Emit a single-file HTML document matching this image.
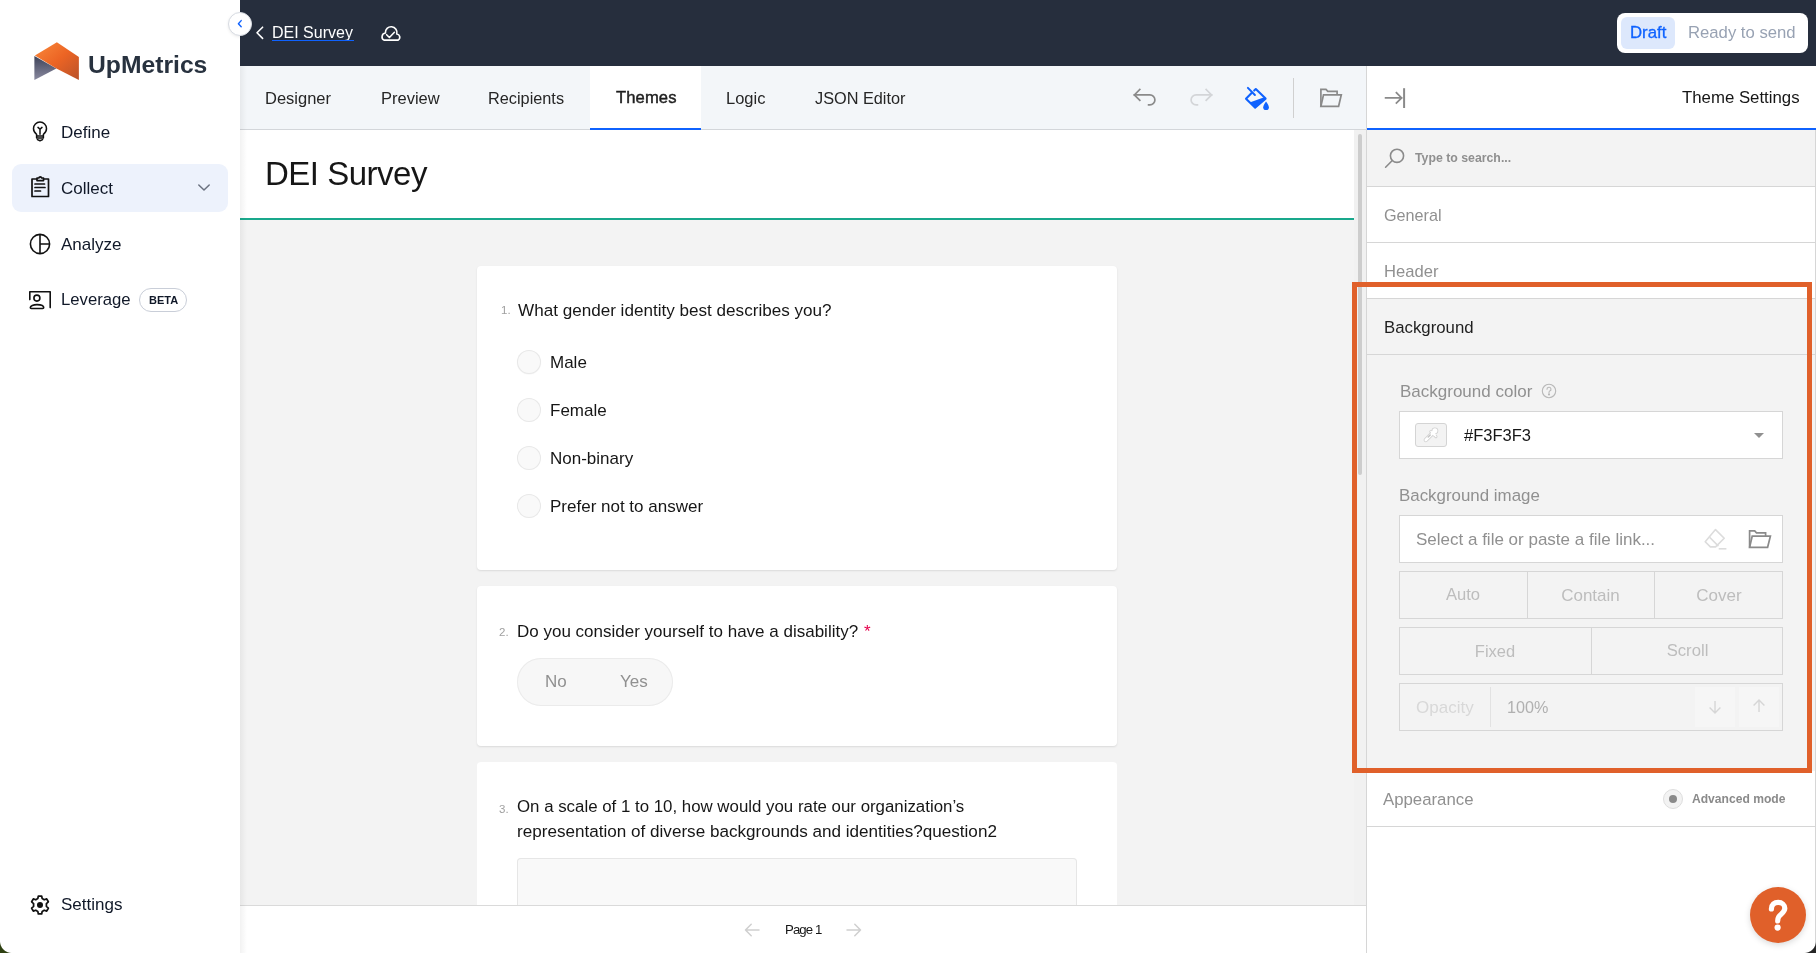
<!DOCTYPE html>
<html><head><meta charset="utf-8">
<style>
*{box-sizing:border-box;margin:0;padding:0}
html,body{width:1816px;height:953px;overflow:hidden;background:#fff;font-family:"Liberation Sans",sans-serif;color:#161616}
.a{position:absolute}
.t{position:absolute;line-height:1;white-space:nowrap;will-change:transform}
svg{position:absolute;overflow:visible}
</style></head><body>

<!-- ============ LEFT SIDEBAR ============ -->
<div class="a" id="side" style="left:0;top:0;width:240px;height:953px;background:#fff">
  <!-- logo -->
  <svg style="left:0;top:0" width="100" height="100" viewBox="0 0 100 100">
    <defs>
      <linearGradient id="og" x1="0" y1="0" x2="1" y2="1">
        <stop offset="0" stop-color="#f98a3c"/><stop offset="0.5" stop-color="#ec6424"/><stop offset="1" stop-color="#b9522a"/>
      </linearGradient>
      <linearGradient id="gg" x1="0" y1="0" x2="0" y2="1">
        <stop offset="0" stop-color="#3e4258"/><stop offset="1" stop-color="#8a8aa0"/>
      </linearGradient>
    </defs>
    <path d="M34.4 55.9 L56.4 68.5 L34.4 80 Z" fill="url(#gg)"/>
    <path d="M56.9 42.3 L78.9 57 L78.9 80 L56.4 68.5 L34.9 55.4 Z" fill="url(#og)"/>
  </svg>
  <div class="t" style="left:87.5px;top:53.3px;font-size:24.7px;font-weight:700;color:#28323f;letter-spacing:0">UpMetrics</div>

  <!-- Define -->
  <svg style="left:30px;top:119px" width="20" height="24" viewBox="0 0 20 24" fill="none" stroke="#111" stroke-width="1.5" stroke-linecap="round" stroke-linejoin="round">
    <path d="M6.6 15.4 C4.6 14 3.5 12.1 3.5 9.6 A6.5 6.5 0 0 1 16.5 9.6 C16.5 12.1 15.4 14 13.4 15.4 L13.4 19 L6.6 19 Z"/>
    <path d="M8 8.4 L10 10.3 L12 8.4 M10 10.3 L10 15.2"/>
    <path d="M6.8 17 H13.2 M7.4 20.6 L10 21.8 L12.6 20.6" />
  </svg>
  <div class="t" style="left:60.6px;top:123.7px;font-size:17px;color:#101828">Define</div>

  <!-- Collect (active) -->
  <div class="a" style="left:12px;top:164px;width:216px;height:48px;border-radius:9px;background:#edf2fc"></div>
  <svg style="left:30px;top:176px" width="20" height="22" viewBox="0 0 20 22" fill="none" stroke="#111" stroke-width="1.7" stroke-linejoin="round">
    <path d="M7 3 H2 V20.5 H18.5 V3 H13.5"/>
    <path d="M7 4.6 V2 H8.8 A1.5 1.5 0 0 1 11.7 2 H13.5 V4.6 Z"/>
    <path d="M5 8 H14.5 M5 11.5 H15 M5 15 H10.5" stroke-linecap="round"/>
  </svg>
  <div class="t" style="left:60.5px;top:179.8px;font-size:17px;color:#101828">Collect</div>
  <svg style="left:196px;top:181px" width="16" height="12" viewBox="0 0 16 12" fill="none" stroke="#6b7280" stroke-width="1.5" stroke-linecap="round" stroke-linejoin="round">
    <path d="M2.8 4 L8 9 L13.2 4"/>
  </svg>

  <!-- Analyze -->
  <svg style="left:29px;top:233px" width="22" height="22" viewBox="0 0 22 22" fill="none" stroke="#111" stroke-width="1.6">
    <circle cx="11" cy="11" r="9.6"/>
    <path d="M11 1.4 V20.6 M11 11 H20.6"/>
  </svg>
  <div class="t" style="left:60.8px;top:235.7px;font-size:17px;color:#101828">Analyze</div>

  <!-- Leverage -->
  <svg style="left:28px;top:290px" width="24" height="22" viewBox="0 0 24 22" fill="none" stroke="#111" stroke-width="1.6" stroke-linejoin="round">
    <path d="M1.8 9.6 V1.7 H22.2 V17.6" stroke-linecap="round"/>
    <circle cx="8.9" cy="8.1" r="3"/>
    <path d="M2.3 17.6 C2.3 15.8 5.4 14.6 9 14.6 C12.6 14.6 15.7 15.8 15.7 17.6 C15.7 18.2 15.3 18.5 14.7 18.5 H3.3 C2.7 18.5 2.3 18.2 2.3 17.6 Z"/>
  </svg>
  <div class="t" style="left:60.8px;top:291.5px;font-size:16.7px;color:#101828">Leverage</div>
  <div class="a" style="left:139px;top:288px;width:48px;height:24px;border-radius:12px;border:1px solid #c9ced8"></div>
  <div class="t" style="left:148.5px;top:294.6px;font-size:11px;font-weight:700;color:#101828;letter-spacing:0">BETA</div>

  <!-- Settings -->
  <svg style="left:29px;top:894px" width="22" height="22" viewBox="0 0 24 24" fill="none" stroke="#111" stroke-width="1.9" stroke-linejoin="round">
    <path d="M10.2 2.2 H13.8 L14.4 5 L16.6 6.3 L19.3 5.4 L21.1 8.5 L19 10.4 V13.6 L21.1 15.5 L19.3 18.6 L16.6 17.7 L14.4 19 L13.8 21.8 H10.2 L9.6 19 L7.4 17.7 L4.7 18.6 L2.9 15.5 L5 13.6 V10.4 L2.9 8.5 L4.7 5.4 L7.4 6.3 L9.6 5 Z"/>
    <circle cx="12" cy="12" r="3.3" fill="#111" stroke="none"/>
  </svg>
  <div class="t" style="left:60.5px;top:896.2px;font-size:17px;color:#101828">Settings</div>
</div>

<!-- ============ TOP BAR ============ -->
<div class="a" style="left:240px;top:0;width:1576px;height:66px;background:#262e3d"></div>
<!-- collapse circle -->
<div class="a" style="left:228px;top:12px;width:24px;height:24px;border-radius:50%;background:#fff;border:1px solid #d7dbe2;box-shadow:0 1px 3px rgba(0,0,0,.08)"></div>
<svg style="left:228px;top:12px" width="24" height="24" viewBox="0 0 24 24" fill="none" stroke="#0f62fe" stroke-width="1.4" stroke-linecap="round" stroke-linejoin="round">
  <path d="M13.2 8.6 L10.4 11.7 L13.2 14.8"/>
</svg>
<svg style="left:252px;top:24px" width="16" height="18" viewBox="0 0 16 18" fill="none" stroke="#fff" stroke-width="1.6" stroke-linecap="round" stroke-linejoin="round">
  <path d="M10.6 3.2 L5 8.8 L10.6 14.4"/>
</svg>
<div class="t" style="left:272.3px;top:25.1px;font-size:16px;color:#fff">DEI Survey</div>
<div class="a" style="left:272px;top:40px;width:82px;height:1.3px;background:#0f62fe"></div>
<svg style="left:378px;top:22px" width="26" height="22" viewBox="0 0 26 22" fill="none" stroke="#fff" stroke-width="1.6" stroke-linejoin="round" stroke-linecap="round">
  <path d="M6 18.1 A3.8 3.8 0 0 1 7.4 11 A5.8 5.8 0 1 1 18.8 12 A3.3 3.3 0 0 1 20.2 18.1 Z"/>
  <path d="M8.6 12.7 L11.4 15.5 L16.4 10.3"/>
</svg>
<!-- draft toggle -->
<div class="a" style="left:1617px;top:13px;width:191px;height:40px;border-radius:8px;background:#fff"></div>
<div class="a" style="left:1621px;top:17px;width:54px;height:32px;border-radius:6px;background:#dde8fc"></div>
<div class="t" style="left:1629.9px;top:24.6px;font-size:16.8px;color:#0f62fe;-webkit-text-stroke:0.3px #0f62fe">Draft</div>
<div class="t" style="left:1687.7px;top:25.4px;font-size:16.7px;color:#98a2b3">Ready to send</div>

<!-- ============ TABS BAR ============ -->
<div class="a" style="left:240px;top:66px;width:1126px;height:64px;background:#f3f6f9;border-bottom:1px solid #d3d6da"></div>
<div class="a" style="left:590px;top:66px;width:111px;height:63px;background:#fff"></div>
<div class="a" style="left:590px;top:128px;width:111px;height:2px;background:#0f62fe"></div>
<div class="t" style="left:264.5px;top:89.9px;font-size:16.5px;color:#262626">Designer</div>
<div class="t" style="left:380.5px;top:89.9px;font-size:16.5px;color:#262626">Preview</div>
<div class="t" style="left:488.3px;top:89.9px;font-size:16.3px;color:#262626">Recipients</div>
<div class="t" style="left:615.6px;top:90.2px;font-size:16.6px;letter-spacing:0.1px;color:#1e1e1e;-webkit-text-stroke:0.45px #1e1e1e">Themes</div>
<div class="t" style="left:725.5px;top:89.9px;font-size:16.5px;color:#262626">Logic</div>
<div class="t" style="left:815px;top:89.9px;font-size:16.3px;color:#262626">JSON Editor</div>

<!-- undo -->
<svg style="left:1131px;top:86px" width="28" height="24" viewBox="0 0 28 24" fill="none" stroke="#8a8a8a" stroke-width="1.7" stroke-linecap="square" stroke-linejoin="miter">
  <path d="M8.8 3.5 L3.4 8.9 L8.8 14.3"/>
  <path d="M3.4 8.9 H18.9 A5 5 0 0 1 18.9 18.9 H17.6"/>
</svg>
<!-- redo -->
<svg style="left:1186.5px;top:86px" width="28" height="24" viewBox="0 0 28 24" fill="none" stroke="#d3d5d8" stroke-width="1.7" stroke-linecap="square">
  <path d="M19.2 3.5 L24.6 8.9 L19.2 14.3"/>
  <path d="M24.6 8.9 H9.1 A5 5 0 0 0 9.1 18.9 H10.4"/>
</svg>
<!-- paint bucket -->
<svg style="left:1243px;top:85px" width="28" height="27" viewBox="0 0 28 27" fill="none">
  <path d="M4.9 2.9 L11.9 10" stroke="#0f62fe" stroke-width="2" stroke-linecap="round"/>
  <path d="M8.6 8 L3 13.8 L12 22.6 L22.6 13.6 L12.8 4.1 L11.2 5.6" stroke="#0f62fe" stroke-width="2.1" stroke-linejoin="round" stroke-linecap="round"/>
  <path d="M6.6 17.4 L20.6 12.6 L22.8 13.6 L12 23.4 Z" fill="#0f62fe"/>
  <path d="M25.9 22.2 A2.85 2.85 0 0 1 20.2 22.2 C20.2 20.8 21.6 18.6 23 16.6 C24.4 18.6 25.9 20.8 25.9 22.2 Z" fill="#0f62fe"/>
</svg>
<div class="a" style="left:1293px;top:78px;width:1px;height:40px;background:#d0d0d0"></div>
<!-- folder -->
<svg style="left:1318px;top:86px" width="26" height="24" viewBox="0 0 26 24" fill="none" stroke="#8a8a8a" stroke-width="1.7" stroke-linejoin="miter">
  <path d="M2.9 20.3 V3.4 H8 L9.8 5.4 H19.1 V8.6"/>
  <path d="M2.9 20.3 L5.5 8.8 H23.3 L20.6 20.3 Z"/>
</svg>

<!-- ============ SURVEY AREA ============ -->
<div class="a" style="left:240px;top:130px;width:1126px;height:775px;background:#f3f3f3;overflow:hidden">
  <div class="a" style="left:0;top:0;width:1114px;height:88px;background:#fff"></div>
  <div class="a" style="left:0;top:88px;width:1114px;height:2px;background:#19a88c"></div>
  <div class="a" style="left:1114px;top:0;width:12px;height:775px;background:#f1f1f1"></div>
  <div class="a" style="left:1118px;top:3.5px;width:4px;height:341px;border-radius:2px;background:#cdcdcd"></div>
</div>
<div class="t" style="left:264.8px;top:157px;font-size:33px;letter-spacing:-0.5px;color:#161616">DEI Survey</div>

<!-- card 1 -->
<div class="a" style="left:477px;top:266px;width:640px;height:304px;background:#fff;border-radius:4px;box-shadow:0 1px 2px rgba(0,0,0,.10)"></div>
<div class="t" style="left:500.5px;top:305.1px;font-size:11.5px;color:#a0a0a0">1.</div>
<div class="t" style="left:517.5px;top:301.6px;font-size:17.1px;color:#161616">What gender identity best describes you?</div>
<div class="a" style="left:517px;top:350px;width:24px;height:24px;border-radius:50%;background:#f9f9f9;box-shadow:inset 0 0 0 1px #e8e8e8, 0 0.5px 1px rgba(0,0,0,.05)"></div>
<div class="t" style="left:549.5px;top:353.6px;font-size:17px;color:#161616">Male</div>
<div class="a" style="left:517px;top:398px;width:24px;height:24px;border-radius:50%;background:#f9f9f9;box-shadow:inset 0 0 0 1px #e8e8e8"></div>
<div class="t" style="left:549.5px;top:401.6px;font-size:17px;color:#161616">Female</div>
<div class="a" style="left:517px;top:446px;width:24px;height:24px;border-radius:50%;background:#f9f9f9;box-shadow:inset 0 0 0 1px #e8e8e8"></div>
<div class="t" style="left:549.5px;top:449.6px;font-size:17px;color:#161616">Non-binary</div>
<div class="a" style="left:517px;top:494px;width:24px;height:24px;border-radius:50%;background:#f9f9f9;box-shadow:inset 0 0 0 1px #e8e8e8"></div>
<div class="t" style="left:549.5px;top:497.6px;font-size:17px;color:#161616">Prefer not to answer</div>

<!-- card 2 -->
<div class="a" style="left:477px;top:586px;width:640px;height:160px;background:#fff;border-radius:4px;box-shadow:0 1px 2px rgba(0,0,0,.10)"></div>
<div class="t" style="left:498.5px;top:627.3px;font-size:11.5px;color:#a0a0a0">2.</div>
<div class="t" style="left:517px;top:623.1px;font-size:17px;color:#161616">Do you consider yourself to have a disability?</div>
<div class="t" style="left:864.3px;top:623.1px;font-size:17px;color:#e5004c">*</div>
<div class="a" style="left:517px;top:658px;width:156px;height:48px;border-radius:24px;background:#f7f7f7;box-shadow:inset 0 0 0 1px #ebebeb"></div>
<div class="t" style="left:545px;top:673.1px;font-size:17px;color:#909090">No</div>
<div class="t" style="left:619.5px;top:673.1px;font-size:17px;color:#909090">Yes</div>

<!-- card 3 -->
<div class="a" style="left:477px;top:762px;width:640px;height:143px;background:#fff;border-radius:4px 4px 0 0"></div>
<div class="t" style="left:498.5px;top:803.5px;font-size:11.5px;color:#a0a0a0">3.</div>
<div class="t" style="left:517px;top:799.3px;font-size:16.85px;color:#161616">On a scale of 1 to 10, how would you rate our organization’s</div>
<div class="t" style="left:517px;top:822.7px;font-size:17.1px;color:#161616">representation of diverse backgrounds and identities?question2</div>
<div class="a" style="left:517px;top:858px;width:560px;height:60px;border-radius:4px;background:#f9f9f9;box-shadow:inset 0 0 0 1px #e6e6e6"></div>

<!-- footer -->
<div class="a" style="left:240px;top:905px;width:1126px;height:48px;background:#fff;border-top:1px solid #dadada"></div>
<svg style="left:743px;top:921px" width="18" height="18" viewBox="0 0 18 18" fill="none" stroke="#cfcfcf" stroke-width="1.5" stroke-linecap="round" stroke-linejoin="round">
  <path d="M16 9 H2.5 M8.2 3.3 L2.5 9 L8.2 14.7"/>
</svg>
<div class="t" style="left:784.5px;top:923.1px;font-size:13.2px;color:#161616;letter-spacing:-0.9px">Page 1</div>
<svg style="left:845px;top:921px" width="18" height="18" viewBox="0 0 18 18" fill="none" stroke="#cfcfcf" stroke-width="1.5" stroke-linecap="round" stroke-linejoin="round">
  <path d="M2 9 H15.5 M9.8 3.3 L15.5 9 L9.8 14.7"/>
</svg>

<div class="a" style="left:240px;top:66px;width:7px;height:887px;background:linear-gradient(to right, rgba(0,0,0,.05), rgba(0,0,0,0))"></div>
<!-- ============ RIGHT PANEL ============ -->
<div class="a" style="left:1366px;top:66px;width:450px;height:887px;background:#fff;border-left:1px solid #d6d6d6"></div>
<div class="a" style="left:1367px;top:128px;width:449px;height:2px;background:#0f62fe"></div>
<svg style="left:1382px;top:86px" width="26" height="24" viewBox="0 0 26 24" fill="none" stroke="#8a8a8a" stroke-width="1.7">
  <path d="M3.6 11.9 H19.6 M14.4 6.7 L19.6 11.9 L14.4 17.1" stroke-linecap="square"/>
  <path d="M22.1 2.2 V22" stroke-width="2"/>
</svg>
<div class="t" style="left:1682px;top:89.6px;font-size:16.8px;color:#161616">Theme Settings</div>

<!-- search row -->
<div class="a" style="left:1367px;top:130px;width:449px;height:57px;background:#f3f3f3;border-bottom:1px solid #d6d6d6"></div>
<svg style="left:1383px;top:146px" width="24" height="24" viewBox="0 0 24 24" fill="none" stroke="#8a8a8a" stroke-width="1.6">
  <circle cx="14" cy="9.8" r="6.6"/>
  <path d="M9.3 14.5 L2.6 21.2" stroke-linecap="round"/>
</svg>
<div class="t" style="left:1415.3px;top:152.2px;font-size:12.3px;font-weight:700;color:#8f8f8f">Type to search...</div>

<!-- sections -->
<div class="a" style="left:1367px;top:187px;width:449px;height:56px;background:#fff;border-bottom:1px solid #d6d6d6"></div>
<div class="t" style="left:1383.8px;top:207.4px;font-size:16.2px;color:#909090">General</div>
<div class="a" style="left:1367px;top:243px;width:449px;height:56px;background:#fff;border-bottom:1px solid #d6d6d6"></div>
<div class="t" style="left:1383.6px;top:264.2px;font-size:16.6px;color:#909090">Header</div>
<div class="a" style="left:1367px;top:299px;width:449px;height:56px;background:#f3f3f3;border-bottom:1px solid #d6d6d6"></div>
<div class="t" style="left:1383.5px;top:319.5px;font-size:16.8px;color:#1f1f1f">Background</div>
<div class="a" style="left:1367px;top:355px;width:449px;height:416px;background:#f3f3f3"></div>

<div class="t" style="left:1399.5px;top:382.6px;font-size:17px;color:#909090">Background color</div>
<svg style="left:1540px;top:382px" width="18" height="18" viewBox="0 0 18 18" fill="none" stroke="#b8b8b8" stroke-width="1.1">
  <circle cx="9" cy="9" r="6.7"/>
  <path d="M7 7.3 A2 2 0 1 1 9.6 9.1 C9.1 9.4 9 9.8 9 10.4" stroke-linecap="round"/>
  <circle cx="9" cy="12.4" r="0.55" fill="#b8b8b8"/>
</svg>
<div class="a" style="left:1399px;top:411px;width:384px;height:48px;background:#fff;border:1px solid #d6d6d6"></div>
<div class="a" style="left:1415px;top:423px;width:32px;height:24px;background:#f3f3f3;border:1px solid #d4d4d4;border-radius:3px"></div>
<svg style="left:1415px;top:423px" width="32" height="24" viewBox="0 0 32 24" fill="none">
  <g stroke="#d2d2d2" stroke-linecap="round">
    <path d="M10.8 17 L17.2 10.6" stroke-width="4.4"/>
    <path d="M15.9 8.6 L20.9 13.6" stroke-width="3.2"/>
    <circle cx="19.9" cy="7.8" r="3.4" fill="#d2d2d2" stroke="none"/>
  </g>
  <g stroke="#fff" stroke-linecap="round">
    <path d="M10.8 17 L17.2 10.6" stroke-width="2.6"/>
    <path d="M15.9 8.6 L20.9 13.6" stroke-width="1.4"/>
    <circle cx="19.9" cy="7.8" r="2.5" fill="#fff" stroke="none"/>
    <path d="M17.5 9.5 L19.5 11.5" stroke-width="2.8"/>
  </g>
  <path d="M15.2 12 L13.2 14" stroke="#c6c6c6" stroke-width="1.5" stroke-linecap="round"/>
</svg>
<div class="t" style="left:1463.5px;top:427px;font-size:16.5px;color:#161616">#F3F3F3</div>
<svg style="left:1754px;top:433px" width="10" height="5" viewBox="0 0 10 5"><path d="M0 0 H10 L5 5 Z" fill="#909090"/></svg>

<div class="t" style="left:1399.4px;top:487.5px;font-size:16.9px;color:#909090">Background image</div>
<div class="a" style="left:1399px;top:515px;width:384px;height:48px;background:#fff;border:1px solid #d6d6d6"></div>
<div class="t" style="left:1415.5px;top:530.7px;font-size:17px;color:#909090">Select a file or paste a file link...</div>
<svg style="left:1702px;top:527px" width="26" height="24" viewBox="0 0 26 24" fill="none" stroke="#dcdcdc" stroke-width="1.6" stroke-linejoin="round">
  <path d="M13.5 2.6 L22.2 11.3 L13.6 19.9 H8.4 L3.2 14.7 Z"/>
  <path d="M7.6 10.3 L16.4 19.1"/>
  <path d="M17.5 21.8 H23.6" stroke-linecap="square"/>
</svg>
<svg style="left:1747px;top:528px" width="26" height="22" viewBox="0 0 26 22" fill="none" stroke="#8a8a8a" stroke-width="1.7">
  <path d="M2.6 19.3 V2.9 H7.7 L9.5 4.9 H18.6 V8"/>
  <path d="M2.6 19.3 L5.2 8.2 H23.4 L20.6 19.3 Z"/>
</svg>

<!-- size buttons -->
<div class="a" style="left:1399px;top:571px;width:384px;height:48px;border:1px solid #d6d6d6"></div>
<div class="a" style="left:1527px;top:571px;width:1px;height:48px;background:#d6d6d6"></div>
<div class="a" style="left:1654px;top:571px;width:1px;height:48px;background:#d6d6d6"></div>
<div class="t" style="left:1399px;width:128px;text-align:center;top:587.4px;font-size:16.6px;color:#bdbdbd">Auto</div>
<div class="t" style="left:1527px;width:127px;text-align:center;top:586.6px;font-size:17px;color:#bdbdbd">Contain</div>
<div class="t" style="left:1655px;width:128px;text-align:center;top:586.6px;font-size:17px;color:#bdbdbd">Cover</div>

<div class="a" style="left:1399px;top:627px;width:384px;height:48px;border:1px solid #d6d6d6"></div>
<div class="a" style="left:1591px;top:627px;width:1px;height:48px;background:#d6d6d6"></div>
<div class="t" style="left:1399px;width:192px;text-align:center;top:642.8px;font-size:16.5px;color:#bdbdbd">Fixed</div>
<div class="t" style="left:1592px;width:191px;text-align:center;top:642.8px;font-size:16.7px;color:#bdbdbd">Scroll</div>

<div class="a" style="left:1399px;top:683px;width:384px;height:48px;border:1px solid #d6d6d6"></div>
<div class="a" style="left:1490px;top:687px;width:1px;height:40px;background:#e2e2e2"></div>
<div class="t" style="left:1415.7px;top:698.8px;font-size:17px;color:#d8d8d8">Opacity</div>
<div class="t" style="left:1507px;top:699.2px;font-size:16.2px;color:#b0b0b0">100%</div>
<div class="a" style="left:1695px;top:687px;width:40px;height:40px;background:#f6f6f6"></div>
<div class="a" style="left:1739px;top:687px;width:40px;height:40px;background:#f6f6f6"></div>
<svg style="left:1707px;top:699px" width="16" height="16" viewBox="0 0 16 16" fill="none" stroke="#d6d6d6" stroke-width="1.4">
  <path d="M8 2 V14 M2.6 8.6 L8 14 L13.4 8.6"/>
</svg>
<svg style="left:1751px;top:698px" width="16" height="16" viewBox="0 0 16 16" fill="none" stroke="#d6d6d6" stroke-width="1.4">
  <path d="M8 14 V2 M2.6 7.4 L8 2 L13.4 7.4"/>
</svg>

<!-- appearance -->
<div class="a" style="left:1367px;top:771px;width:449px;height:56px;background:#fff;border-bottom:1px solid #d6d6d6"></div>
<div class="t" style="left:1383.3px;top:792px;font-size:16.8px;color:#909090">Appearance</div>
<div class="a" style="left:1663px;top:789px;width:20px;height:20px;border-radius:50%;background:#f3f3f3;border:1px solid #dedede"></div>
<div class="a" style="left:1669px;top:795px;width:8px;height:8px;border-radius:50%;background:#8a8a8a"></div>
<div class="t" style="left:1692px;top:792.8px;font-size:12.1px;font-weight:700;color:#8a8a8a">Advanced mode</div>

<!-- right edge line -->
<div class="a" style="left:1815px;top:130px;width:1px;height:815px;background:#d6d6d6"></div>

<!-- scrollbar right panel edge -->

<!-- orange highlight -->
<div class="a" style="left:1352px;top:282px;width:460px;height:491px;border:5px solid #e0602a"></div>

<!-- help -->
<div class="a" style="left:1750px;top:887px;width:56px;height:56px;border-radius:50%;background:#e0602a;box-shadow:0 2px 6px rgba(0,0,0,.15)"></div>
<svg style="left:1750px;top:887px" width="56" height="56" viewBox="0 0 56 56" fill="none" stroke="#fff" stroke-width="5.2" stroke-linecap="round" stroke-linejoin="round">
  <path d="M21.4 22 C21.4 17.6 24.4 15.4 28.2 15.4 C32 15.4 34.8 17.9 34.8 21.3 C34.8 25.4 30.6 26.9 28.7 29.8 C28 30.9 27.7 32.2 27.7 34"/>
  <circle cx="27.6" cy="40.6" r="3.1" fill="#fff" stroke="none"/>
</svg>
<!-- window corners -->
<div class="a" style="left:0;top:941px;width:12px;height:12px;background:radial-gradient(circle at 12px 0, rgba(0,0,0,0) 11.5px, #2e4012 12.5px)"></div>
<div class="a" style="left:1804px;top:941px;width:12px;height:12px;background:radial-gradient(circle at 0 0, rgba(0,0,0,0) 11.5px, #262626 12.5px)"></div>

</body></html>
